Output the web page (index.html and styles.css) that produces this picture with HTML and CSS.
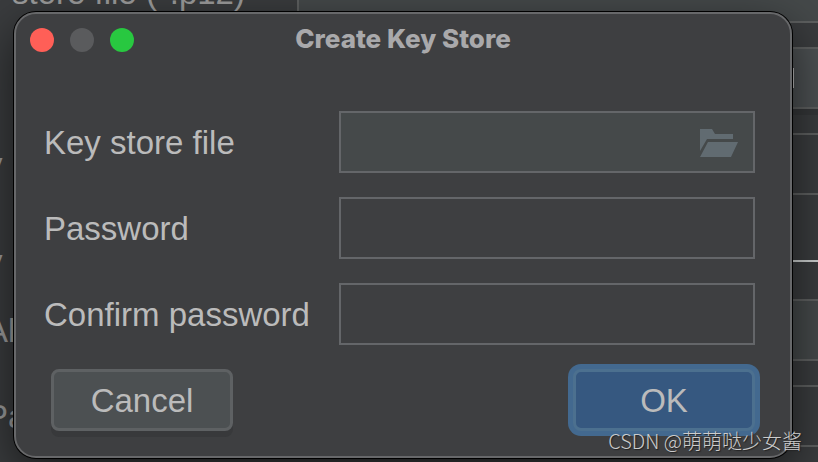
FILE: index.html
```html
<!DOCTYPE html>
<html lang="en">
<head>
    <meta charset="UTF-8">
    <meta name="viewport" content="width=device-width, initial-scale=1.0">
    <title>Create Key Store</title>
    <link rel="stylesheet" href="styles.css">
</head>
<body>
    <!-- window behind the dialog -->
    <div class="backdrop">
        <div class="back-row first">
            <span class="back-label">store file (*.p12)</span>
            <span class="back-field filled"></span>
        </div>
        <div class="back-button"><span class="back-mark"></span></div>
        <div class="back-row">
            <span class="back-label cut">y</span>
            <span class="back-field"></span>
        </div>
        <div class="back-row line">
            <span class="back-label cut">y</span>
            <span class="back-rule"></span>
        </div>
        <div class="back-row">
            <span class="back-label cut">Al</span>
            <span class="back-field filled"></span>
        </div>
        <div class="back-row">
            <span class="back-label cut">Pa</span>
            <span class="back-field"></span>
        </div>
    </div>

    <form class="dialog">
        <div class="titlebar">
            <div class="lights">
                <button type="button" class="light red" aria-label="Close"></button>
                <button type="button" class="light gray" aria-label="Minimize" disabled></button>
                <button type="button" class="light green" aria-label="Zoom"></button>
            </div>
            <h1>Create Key Store</h1>
        </div>

        <div class="fields">
            <label for="storeFile">Key store file</label>
            <div class="file-box">
                <input type="text" id="storeFile">
                <button type="button" class="browse" aria-label="Browse">
                    <svg width="38" height="28" viewBox="0 0 38 28" fill="#616b71">
                        <path d="M0 0h12l3 5h18v5H7L0 22z"/>
                        <path d="M8 13h30l-7 15H0z"/>
                    </svg>
                </button>
            </div>

            <label for="password">Password</label>
            <input type="password" id="password">

            <label for="confirm">Confirm password</label>
            <input type="password" id="confirm">
        </div>

        <div class="buttons">
            <button type="button" class="btn">Cancel</button>
            <button type="submit" class="btn ok">OK</button>
        </div>
    </form>

    <div class="watermark">CSDN @萌萌哒少女酱</div>
</body>
</html>
```
FILE: styles.css
```css
* {
    box-sizing: border-box;
}
body {
    margin: 0;
    min-height: 100vh;
    position: relative;
    overflow: hidden;
    background: #3a3c3e;
    color: #bbbbbb;
    font-family: "Liberation Sans", Arial, sans-serif;
    font-size: 33px;
    line-height: 38px;
}

/* window behind */
.backdrop {
    display: flow-root;
    height: 100vh;
    overflow: hidden;
    color: #9c9c9c;
}
.back-row {
    display: grid;
    grid-template-columns: 297px 1fr;
    align-items: center;
    height: 62px;
    margin-bottom: 24px;
}
/* scrolled partly out of view */
.back-row.first {
    margin-top: -39px;
}
.back-label {
    padding-left: 12px;
    padding-top: 2px;
    white-space: nowrap;
}
.back-label.cut {
    padding-left: 0;
    margin-left: -14px;
}
.back-field {
    height: 62px;
    border: 2px solid #5e6060;
    border-right: 0;
}
.back-field.filled {
    background: #45494a;
}
.back-button {
    display: flex;
    align-items: center;
    justify-content: flex-end;
    height: 62px;
    margin-bottom: 24px;
    margin-left: 297px;
    padding-right: 24px;
    background: #4c5052;
    border-top: 2px solid #5e6060;
    border-bottom: 2px solid #5e6060;
    box-shadow: 0 6px 0 #343638;
}
.back-mark {
    width: 4px;
    height: 20px;
    background: #bbbbbb;
}
.back-row.line {
    margin-top: 35px;
    margin-bottom: 7px;
}
.back-rule {
    height: 2px;
    background: #cdd0d0;
}

/* dialog */
.dialog {
    position: absolute;
    top: 12px;
    left: 14px;
    right: 26px;
    padding-bottom: 25px;
    background: #3e3f41;
    border: 2px solid #67686a;
    border-radius: 22px;
    box-shadow: 0 0 0 1px #000, 0 16px 50px rgba(0, 0, 0, 0.6);
}
.titlebar {
    display: grid;
    grid-template-columns: 1fr auto 1fr;
    align-items: center;
    height: 52px;
    padding: 0 14px;
}
.titlebar h1 {
    margin: 0;
    padding-bottom: 2px;
    color: #a9a9ab;
    font-family: Inter, "Liberation Sans", sans-serif;
    font-size: 26px;
    font-weight: 800;
    line-height: 32px;
}
.lights {
    display: flex;
    gap: 16px;
}
.light {
    width: 24px;
    height: 24px;
    padding: 0;
    border: 0;
    border-radius: 50%;
}
.red {
    background: #ff5f57;
}
.gray {
    background: #5a5b5d;
}
.green {
    background: #28c840;
}
.fields {
    display: grid;
    grid-template-columns: auto 1fr;
    gap: 24px 29px;
    align-items: center;
    padding: 45px 35px 0 28px;
}
.fields label {
    padding-top: 2px;
}
input {
    width: 100%;
    height: 62px;
    padding: 0 12px;
    background: transparent;
    border: 2px solid #646669;
    border-radius: 0;
    color: #bbbbbb;
    font: inherit;
}
.file-box {
    display: flex;
    align-items: center;
    height: 62px;
    background: #45494a;
    border: 2px solid #646669;
}
.file-box input {
    flex: 1;
    min-width: 0;
    height: 58px;
    border: 0;
}
.browse {
    display: flex;
    padding: 2px 15px 0;
    background: none;
    border: 0;
}
.buttons {
    display: flex;
    justify-content: space-between;
    padding: 24px 35px 0;
}
.btn {
    width: 182px;
    height: 62px;
    padding: 2px 0 0;
    background: #4c5052;
    border: 3px solid #5e6163;
    border-radius: 8px;
    box-shadow: 0 6px 0 #38393b;
    color: #bbbbbb;
    font: inherit;
}
.btn.ok {
    background: #365880;
    border-color: #4c708f;
    box-shadow: 0 0 0 5px #43698f;
}

.watermark {
    position: absolute;
    right: 16px;
    bottom: 6px;
    color: #cccccc;
    font-family: "Noto Sans CJK SC", sans-serif;
    font-size: 20px;
    font-weight: 300;
    line-height: 30px;
    text-shadow: 1px 1px 1px #222;
}
```
